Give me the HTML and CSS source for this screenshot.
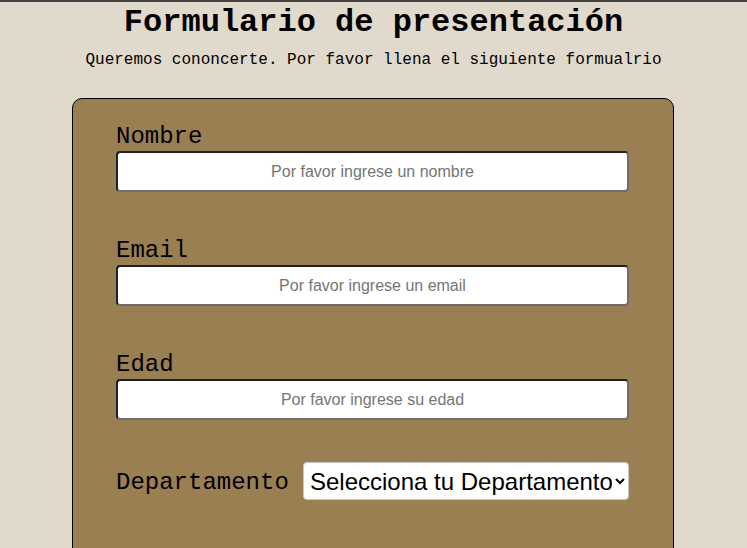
FILE: index.html
```html
<!DOCTYPE html>
<html lang="es">
<head>
<meta charset="utf-8">
<title>Formulario de presentación</title>
<link rel="stylesheet" href="styles.css">
</head>
<body>
<header class="header">
  <h1 class="title">Formulario de presentación</h1>
  <p class="subtitle">Queremos cononcerte. Por favor llena el siguiente formualrio</p>
</header>
<form class="card">
  <div class="field">
    <label class="label" for="nombre">Nombre</label>
    <input class="input" id="nombre" type="text" placeholder="Por favor ingrese un nombre">
  </div>
  <div class="field">
    <label class="label" for="email">Email</label>
    <input class="input" id="email" type="email" placeholder="Por favor ingrese un email">
  </div>
  <div class="field">
    <label class="label" for="edad">Edad</label>
    <input class="input" id="edad" type="number" placeholder="Por favor ingrese su edad">
  </div>
  <div class="row">
    <label class="label" for="depto">Departamento</label>
    <select class="select" id="depto">
      <option>Selecciona tu Departamento</option>
    </select>
  </div>
</form>
</body>
</html>
```
FILE: styles.css
```css
html, body {
  margin: 0;
  padding: 0;
}
body {
  background: #e0d9cc;
  border-top: 2px solid #454545;
  font-family: "Liberation Mono", "DejaVu Sans Mono", monospace;
  color: #000;
  height: 546px;
  overflow: hidden;
}
.header {
  text-align: center;
  padding-top: 3px;
}
.title {
  margin: 0;
  font-size: 32px;
  font-weight: bold;
  line-height: 36px;
}
.subtitle {
  margin: 9px 0 0;
  font-size: 16px;
  line-height: 20px;
}
.card {
  width: 513px;
  margin: 28px auto 0;
  padding: 22px 44px 60px 43px;
  background: #9a7f52;
  border: 1px solid #000;
  border-radius: 10px;
  position: relative;
  left: -0.5px;
}
.field {
  display: flex;
  flex-direction: column;
  margin-bottom: 43px;
}
.label {
  font-size: 24px;
  line-height: 28px;
  padding-top: 2px;
}
.input {
  box-sizing: border-box;
  width: 513px;
  height: 41px;
  border: 2px solid;
  border-color: #222 #6e6e6e #6e6e6e #222;
  border-radius: 4px;
  background: #fff;
  text-align: center;
  font-family: "Liberation Sans", Arial, sans-serif;
  font-size: 16px;
  padding: 0 8px;
  -moz-appearance: textfield;
}
.input::placeholder {
  color: #757575;
}
.input::-webkit-outer-spin-button,
.input::-webkit-inner-spin-button {
  -webkit-appearance: none;
  margin: 0;
}
.row {
  display: flex;
  align-items: center;
  gap: 14px;
  margin-top: -1px;
}
.row .label {
  padding-top: 0;
  margin-top: 4px;
}
.select {
  width: 326px;
  min-width: 0;
  margin-left: auto;
  height: 38px;
  box-sizing: border-box;
  font-family: "Liberation Sans", Arial, sans-serif;
  font-size: 24px;
  color: #000;
  background: #fff;
  border: 1px solid #c8c8c8;
  border-radius: 4px;
  padding: 0 0 0 2px;
}
```
